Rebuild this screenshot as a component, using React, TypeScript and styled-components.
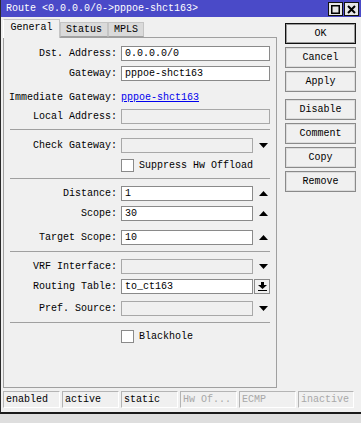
import * as React from 'react';
import styled, { createGlobalStyle } from 'styled-components';

const GlobalStyle = createGlobalStyle`
  html, body {
    margin: 0;
    padding: 0;
    background: #dedede;
  }
  body {
    font-family: "Liberation Mono", "DejaVu Sans Mono", monospace;
    font-size: 10px;
    color: #000;
  }
`;

const Window = styled.div`
  width: 361px;
  height: 414px;
  box-sizing: border-box;
  background: #f0f0f0;
  border-left: 1px solid #2a2a2a;
  border-bottom: 2px solid #1a1a1a;
  display: flex;
  flex-direction: column;
`;

const TitleBar = styled.div`
  height: 17px;
  flex-shrink: 0;
  background: #4a4ac8;
  color: #fff;
  display: flex;
  align-items: center;
  justify-content: space-between;
  padding-left: 5px;
  padding-right: 2px;
  .caption {
    white-space: pre;
    line-height: 17px;
  }
  .controls {
    display: flex;
    gap: 1px;
    align-self: flex-start;
    margin-top: 2px;
  }
`;

const TitleButton = styled.div`
  width: 13px;
  height: 12px;
  background: #e6e6e6;
  border: 1px solid #111;
  display: flex;
  align-items: center;
  justify-content: center;
`;

const Main = styled.div`
  display: flex;
  padding-top: 2px;
  padding-left: 2px;
`;

const LeftColumn = styled.div`
  width: 274px;
  display: flex;
  flex-direction: column;
`;

const TabStrip = styled.div`
  display: flex;
  align-items: flex-end;
  height: 18px;
  position: relative;
  z-index: 1;
`;

const Tab = styled.div<{ $active?: boolean; $w: number }>`
  width: ${p => p.$w}px;
  box-sizing: border-box;
  height: ${p => (p.$active ? 19 : 15)}px;
  margin-bottom: ${p => (p.$active ? -1 : 0)}px;
  background: ${p => (p.$active ? '#f0f0f0' : '#dadada')};
  border: 1px solid #c4c4c4;
  border-bottom: ${p => (p.$active ? 'none' : '1px solid #a0a0a0')};
  border-left-color: ${p => (p.$active ? '#ffffff' : '#c4c4c4')};
  display: flex;
  align-items: center;
  justify-content: center;
  padding-bottom: ${p => (p.$active ? 3 : 0)}px;
`;

const Panel = styled.div`
  height: 351px;
  box-sizing: border-box;
  border: 1px solid #a0a0a0;
  display: flex;
  flex-direction: column;
`;

const Row = styled.div<{ $top: number }>`
  display: flex;
  align-items: center;
  height: 15px;
  margin-top: ${p => p.$top}px;
`;

const Label = styled.div`
  width: 113px;
  margin-right: 4px;
  text-align: right;
  white-space: pre;
`;

const Input = styled.div<{ $w: number; $disabled?: boolean }>`
  width: ${p => p.$w}px;
  height: 15px;
  box-sizing: border-box;
  background: ${p => (p.$disabled ? '#f0f0f0' : '#ffffff')};
  border: 1px solid ${p => (p.$disabled ? '#a8a8a8' : '#8a8a8a')};
  padding-left: 3px;
  line-height: 13px;
  white-space: pre;
`;

const ArrowSlot = styled.div`
  width: 18px;
  height: 15px;
  display: flex;
  align-items: center;
  padding-left: 6px;
  box-sizing: border-box;
`;

const SmallButton = styled.div`
  width: 16px;
  height: 15px;
  margin-left: 1px;
  box-sizing: border-box;
  border: 1px solid #8a8a8a;
  background: #f0f0f0;
  display: flex;
  align-items: center;
  justify-content: center;
`;

const Link = styled.span`
  color: #0000ee;
  text-decoration: underline;
`;

const Separator = styled.div<{ $top: number }>`
  margin-top: ${p => p.$top}px;
  margin-left: 6px;
  width: 260px;
  height: 1px;
  background: #a0a0a0;
`;

const CheckRow = styled.label<{ $top: number }>`
  display: flex;
  align-items: center;
  height: 13px;
  margin-top: ${p => p.$top}px;
  margin-left: 117px;
  gap: 5px;
`;

const CheckBox = styled.span`
  width: 13px;
  height: 13px;
  box-sizing: border-box;
  border: 1px solid #8a8a8a;
  background: #fff;
`;

const ButtonColumn = styled.div`
  margin-left: 8px;
  padding-top: 4px;
  display: flex;
  flex-direction: column;
`;

const Button = styled.div<{ $default?: boolean; $gap: number }>`
  width: 71px;
  height: 21px;
  box-sizing: border-box;
  margin-top: ${p => p.$gap}px;
  border: 1px solid ${p => (p.$default ? '#111' : '#8a8a8a')};
  box-shadow: inset 0 0 0 1px ${p => (p.$default ? '#9a9a9a' : '#dcdcdc')};
  background: #f0f0f0;
  display: flex;
  align-items: center;
  justify-content: center;
`;

const StatusBar = styled.div`
  display: flex;
  gap: 2px;
  margin-top: 3px;
  padding-left: 2px;
`;

const StatusCell = styled.div<{ $dim?: boolean; $w?: number }>`
  width: ${p => p.$w ?? 57}px;
  height: 17px;
  box-sizing: border-box;
  border: 1px solid #b4b4b4;
  border-right-color: #ffffff;
  border-bottom-color: #ffffff;
  padding-left: 2px;
  line-height: 15px;
  color: ${p => (p.$dim ? '#a8a8a8' : '#000')};
  white-space: pre;
  overflow: hidden;
`;

const Down = () => (
  <svg width="9" height="5" viewBox="0 0 9 5">
    <polygon points="0,0 9,0 4.5,5" fill="#000" />
  </svg>
);

const Up = () => (
  <svg width="9" height="5" viewBox="0 0 9 5">
    <polygon points="0,5 9,5 4.5,0" fill="#000" />
  </svg>
);

const UnsetIcon = () => (
  <svg width="9" height="9" viewBox="0 0 9 9">
    <rect x="3" y="0" width="3" height="3" fill="#000" />
    <polygon points="0,3 9,3 4.5,7" fill="#000" />
    <rect x="0" y="8" width="9" height="1" fill="#000" />
  </svg>
);

const buttons = [
  { text: 'OK', gap: 0, def: true },
  { text: 'Cancel', gap: 3 },
  { text: 'Apply', gap: 3 },
  { text: 'Disable', gap: 7 },
  { text: 'Comment', gap: 3 },
  { text: 'Copy', gap: 3 },
  { text: 'Remove', gap: 3 },
];

const App = () => {
  return (
    <>
      <GlobalStyle />
      <Window>
        <TitleBar>
          <span className='caption'>Route &lt;0.0.0.0/0-&gt;pppoe-shct163&gt;</span>
          <div className='controls'>
            <TitleButton>
              <svg width="9" height="9" viewBox="0 0 9 9">
                <rect x="0.75" y="0.75" width="7.5" height="7.5" fill="none" stroke="#000" strokeWidth="1.5" />
              </svg>
            </TitleButton>
            <TitleButton>
              <svg width="9" height="9" viewBox="0 0 9 9">
                <path d="M1 1 L8 8 M8 1 L1 8" stroke="#000" strokeWidth="2" />
              </svg>
            </TitleButton>
          </div>
        </TitleBar>
        <Main>
          <LeftColumn>
            <TabStrip>
              <Tab $active $w={57}>General</Tab>
              <Tab $w={48}>Status</Tab>
              <Tab $w={36}>MPLS</Tab>
            </TabStrip>
            <Panel>
              <Row $top={8}>
                <Label>Dst. Address:</Label>
                <Input $w={149}>0.0.0.0/0</Input>
              </Row>
              <Row $top={5}>
                <Label>Gateway:</Label>
                <Input $w={149}>pppoe-shct163</Input>
              </Row>
              <Row $top={9}>
                <Label>Immediate Gateway:</Label>
                <Link>pppoe-shct163</Link>
              </Row>
              <Row $top={4}>
                <Label>Local Address:</Label>
                <Input $w={149} $disabled />
              </Row>
              <Separator $top={5} />
              <Row $top={8}>
                <Label>Check Gateway:</Label>
                <Input $w={132} $disabled />
                <ArrowSlot><Down /></ArrowSlot>
              </Row>
              <CheckRow $top={6}>
                <CheckBox />
                <span>Suppress Hw Offload</span>
              </CheckRow>
              <Separator $top={6} />
              <Row $top={7}>
                <Label>Distance:</Label>
                <Input $w={132}>1</Input>
                <ArrowSlot><Up /></ArrowSlot>
              </Row>
              <Row $top={5}>
                <Label>Scope:</Label>
                <Input $w={132}>30</Input>
                <ArrowSlot><Up /></ArrowSlot>
              </Row>
              <Row $top={9}>
                <Label>Target Scope:</Label>
                <Input $w={132}>10</Input>
                <ArrowSlot><Up /></ArrowSlot>
              </Row>
              <Separator $top={6} />
              <Row $top={7}>
                <Label>VRF Interface:</Label>
                <Input $w={132} $disabled />
                <ArrowSlot><Down /></ArrowSlot>
              </Row>
              <Row $top={5}>
                <Label>Routing Table:</Label>
                <Input $w={132}>to_ct163</Input>
                <SmallButton><UnsetIcon /></SmallButton>
              </Row>
              <Row $top={7}>
                <Label>Pref. Source:</Label>
                <Input $w={132} $disabled />
                <ArrowSlot><Down /></ArrowSlot>
              </Row>
              <Separator $top={6} />
              <CheckRow $top={7}>
                <CheckBox />
                <span>Blackhole</span>
              </CheckRow>
            </Panel>
          </LeftColumn>
          <ButtonColumn>
            {buttons.map(b => (
              <Button key={b.text} $gap={b.gap} $default={b.def}>{b.text}</Button>
            ))}
          </ButtonColumn>
        </Main>
        <StatusBar>
          <StatusCell>enabled</StatusCell>
          <StatusCell>active</StatusCell>
          <StatusCell>static</StatusCell>
          <StatusCell $dim>Hw Of...</StatusCell>
          <StatusCell $dim>ECMP</StatusCell>
          <StatusCell $dim $w={56}>inactive</StatusCell>
        </StatusBar>
      </Window>
    </>
  );
};

export default App;
